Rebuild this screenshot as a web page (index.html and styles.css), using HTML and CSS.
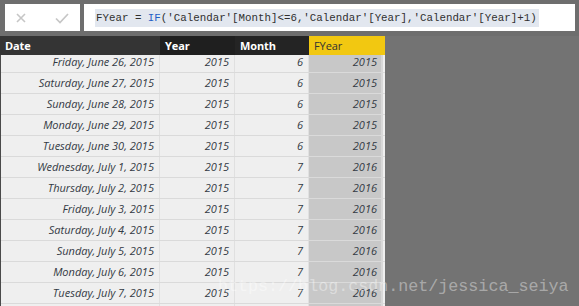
FILE: index.html
```html
<!DOCTYPE html>
<html>
<head>
<meta charset="utf-8">
<link rel="stylesheet" href="styles.css">
</head>
<body>
<div class="toolbar">
  <div class="btns">
    <svg class="icon" width="75" height="27" viewBox="0 0 75 27">
      <path d="M12 10 L20 18 M20 10 L12 18" stroke="#c6c6c6" stroke-width="1.6" fill="none"/>
      <path d="M51 14.5 L55 18.5 L63 10" stroke="#c6c6c6" stroke-width="1.7" fill="none"/>
    </svg>
  </div>
  <div class="formula"><span class="code">FYear = <span class="kw">IF</span>('Calendar'[Month]&lt;=6,'Calendar'[Year],'Calendar'[Year]+1)</span></div>
</div>
<div class="main">
  <div class="table">
    <div class="thead">
      <div class="th th-date">Date</div>
      <div class="th th-year">Year</div>
      <div class="th th-month">Month</div>
      <div class="th th-fyear">FYear</div>
    </div>
    <div class="view">
      <div class="rows">
        <div class="row"><div class="td">Friday, June 26, 2015</div><div class="td">2015</div><div class="td">6</div><div class="td calc">2015</div></div>
        <div class="row"><div class="td">Saturday, June 27, 2015</div><div class="td">2015</div><div class="td">6</div><div class="td calc">2015</div></div>
        <div class="row"><div class="td">Sunday, June 28, 2015</div><div class="td">2015</div><div class="td">6</div><div class="td calc">2015</div></div>
        <div class="row"><div class="td">Monday, June 29, 2015</div><div class="td">2015</div><div class="td">6</div><div class="td calc">2015</div></div>
        <div class="row"><div class="td">Tuesday, June 30, 2015</div><div class="td">2015</div><div class="td">6</div><div class="td calc">2015</div></div>
        <div class="row"><div class="td">Wednesday, July 1, 2015</div><div class="td">2015</div><div class="td">7</div><div class="td calc">2016</div></div>
        <div class="row"><div class="td">Thursday, July 2, 2015</div><div class="td">2015</div><div class="td">7</div><div class="td calc">2016</div></div>
        <div class="row"><div class="td">Friday, July 3, 2015</div><div class="td">2015</div><div class="td">7</div><div class="td calc">2016</div></div>
        <div class="row"><div class="td">Saturday, July 4, 2015</div><div class="td">2015</div><div class="td">7</div><div class="td calc">2016</div></div>
        <div class="row"><div class="td">Sunday, July 5, 2015</div><div class="td">2015</div><div class="td">7</div><div class="td calc">2016</div></div>
        <div class="row"><div class="td">Monday, July 6, 2015</div><div class="td">2015</div><div class="td">7</div><div class="td calc">2016</div></div>
        <div class="row"><div class="td">Tuesday, July 7, 2015</div><div class="td">2015</div><div class="td">7</div><div class="td calc">2016</div></div>
        <div class="row row-partial"><div class="td"></div><div class="td"></div><div class="td"></div><div class="td calc"></div></div>
      </div>
    </div>
  </div>
  <div class="watermark">https://blog.csdn.net/jessica_seiya</div>
</div>
</body>
</html>
```
FILE: styles.css
```css
html, body {
  margin: 0;
  padding: 0;
  width: 579px;
  height: 306px;
  overflow: hidden;
  background: #737373;
}
.toolbar {
  display: flex;
  gap: 4px;
  height: 36px;
  box-sizing: border-box;
  padding: 4px 4px 5px 5px;
  background: #6e6e6e;
}
.btns {
  width: 75px;
  height: 27px;
  background: #ffffff;
}
.icon { display: block; }
.formula {
  flex: 1;
  height: 27px;
  background: #ffffff;
  display: flex;
  align-items: center;
  padding-left: 11px;
}
.code {
  font-family: "Liberation Mono", "DejaVu Sans Mono", monospace;
  font-size: 10.8px;
  line-height: 18px;
  color: #303030;
  background: #e2e7ef;
  padding: 0 2px 0 1px;
}
.kw { color: #1f5fc6; }
.main {
  position: relative;
  display: flex;
  height: 270px;
}
.table {
  width: 385px;
  display: flex;
  flex-direction: column;
}
.thead {
  display: grid;
  grid-template-columns: 160px 75px 74px 76px;
  height: 19px;
}
.th {
  font-family: "Open Sans", "Noto Sans", sans-serif;
  font-size: 11px;
  font-weight: 700;
  color: #ffffff;
  line-height: 19px;
  padding-left: 5px;
  letter-spacing: -0.1px;
}
.th-date { background: #343434; }
.th-year { background: #1f1f1f; }
.th-month { background: #242424; }
.th-fyear { background: #f2c811; color: #333333; font-weight: 400; }
.view {
  flex: 1;
  overflow: hidden;
  border-left: 1px solid #4a4a4a;
}
.rows {
  margin-top: -3px;
}
.row {
  display: grid;
  grid-template-columns: 159px 75px 74px 74px;
  height: 21px;
  box-sizing: border-box;
  border-bottom: 1px solid #dadada;
  background: #efefef;
}
.td {
  font-family: "Open Sans", "Noto Sans", sans-serif;
  font-style: italic;
  font-size: 11px;
  letter-spacing: 0;
  line-height: 20px;
  color: #333a44;
  text-align: right;
  padding-right: 5px;
  border-right: 1px solid #e0e0e0;
}
.td.calc {
  background: #c8c8c8;
  border-right: 2px solid #d8d8d8;
  padding-right: 4px;
}
.watermark {
  position: absolute;
  left: 218px;
  top: 241px;
  font-family: "Liberation Mono", "DejaVu Sans Mono", monospace;
  font-size: 16.7px;
  color: rgba(255, 255, 255, 0.4);
  white-space: nowrap;
}
```
